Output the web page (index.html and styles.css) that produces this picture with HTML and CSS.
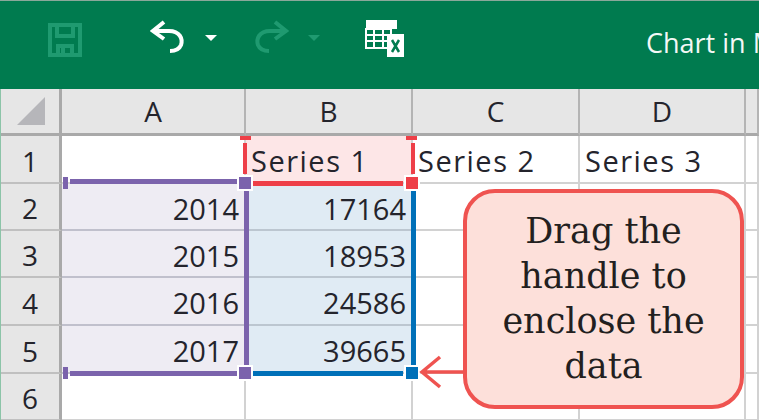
FILE: index.html
```html
<!DOCTYPE html>
<html lang="en">
<head>
    <meta charset="UTF-8">
    <meta name="viewport" content="width=device-width, initial-scale=1.0">
    <title>Chart in Microsoft Word</title>
    <link rel="stylesheet" href="styles.css">
</head>
<body>
    <div class="page">
        <!-- Quick access toolbar -->
        <header class="toolbar">
            <svg class="icon icon-save" width="34" height="34" viewBox="0 0 34 34">
                <path d="M2 2H32V32H2Z M9 3V13H25V3 M10 32V23H24V32 M15 25V32" fill="none" stroke="#1f9a70" stroke-width="4"/>
            </svg>
            <svg class="icon icon-undo" width="36" height="36" viewBox="0 0 36 36">
                <path d="M4 11H19C30 11 33 19 31 25C29 30 25 31 20 31" fill="none" stroke="#fff" stroke-width="4"/>
                <path d="M14 2L3 11L14 19" fill="none" stroke="#fff" stroke-width="4"/>
            </svg>
            <span class="caret"></span>
            <svg class="icon icon-redo" width="36" height="36" viewBox="0 0 36 36">
                <path d="M32 11H17C6 11 3 19 5 25C7 30 11 31 16 31" fill="none" stroke="#1f9a70" stroke-width="4"/>
                <path d="M22 2L33 11L22 19" fill="none" stroke="#1f9a70" stroke-width="4"/>
            </svg>
            <span class="caret caret-dim"></span>
            <svg class="icon icon-table" width="40" height="40" viewBox="0 0 40 40">
                <path d="M1 1H32V10H1Z" fill="#fff"/>
                <path d="M1 10H26V29H1Z M9 10V29 M18 10V29 M1 16H26 M1 22H26" fill="none" stroke="#fff" stroke-width="2"/>
                <path d="M22 15H39V38H22Z" fill="#fff"/>
                <path d="M27 21L34 33M34 21L27 33" stroke="#007b4f" stroke-width="2.5"/>
            </svg>
            <span class="title">Chart in Microsoft Word</span>
        </header>

        <div class="sheet">
            <div class="corner"><span class="corner-mark"></span></div>
            <div class="col-head">A</div>
            <div class="col-head">B</div>
            <div class="col-head">C</div>
            <div class="col-head">D</div>
            <div class="col-head"></div>

            <div class="row-head">1</div>
            <div class="cell"></div>
            <div class="cell text pink">Series 1</div>
            <div class="cell text">Series 2</div>
            <div class="cell text">Series 3</div>
            <div class="cell"></div>

            <div class="row-head">2</div>
            <div class="cell purple">2014</div>
            <div class="cell blue">17164</div>
            <div class="cell"></div>
            <div class="cell"></div>
            <div class="cell"></div>

            <div class="row-head">3</div>
            <div class="cell purple">2015</div>
            <div class="cell blue">18953</div>
            <div class="cell"></div>
            <div class="cell"></div>
            <div class="cell"></div>

            <div class="row-head">4</div>
            <div class="cell purple">2016</div>
            <div class="cell blue">24586</div>
            <div class="cell"></div>
            <div class="cell"></div>
            <div class="cell"></div>

            <div class="row-head">5</div>
            <div class="cell purple">2017</div>
            <div class="cell blue">39665</div>
            <div class="cell"></div>
            <div class="cell"></div>
            <div class="cell"></div>

            <div class="row-head">6</div>
            <div class="cell"></div>
            <div class="cell"></div>
            <div class="cell"></div>
            <div class="cell"></div>
            <div class="cell"></div>
        </div>

        <!-- Range outlines over the sheet -->
        <span class="mark red red-tick-l"></span>
        <span class="mark red red-tick-r"></span>
        <span class="mark red red-left"></span>
        <span class="mark red red-right"></span>
        <span class="mark red red-bottom"></span>
        <span class="mark purple-line purple-top"></span>
        <span class="mark purple-line purple-mid"></span>
        <span class="mark purple-line purple-bottom"></span>
        <span class="mark blue-line blue-right"></span>
        <span class="mark blue-line blue-bottom"></span>
        <span class="mark purple-line handle-end-top"></span>
        <span class="mark purple-line handle-end-bottom"></span>
        <span class="handle purple-line handle-a"></span>
        <span class="handle purple-line handle-b"></span>
        <span class="handle red handle-c"></span>
        <span class="handle blue-line handle-d"></span>

        <div class="callout">Drag the handle to enclose the data</div>
        <svg class="arrow" width="46" height="38" viewBox="0 0 46 38">
            <path d="M3 19H44M21 4L3 19L21 34" fill="none" stroke="#ef5350" stroke-width="3.5"/>
        </svg>
    </div>
</body>
</html>
```

FILE: styles.css
```css
body {
    margin: 0;
    background-color: #fff;
}

.page {
    position: relative;
    width: 759px;
    height: 420px;
    overflow: hidden;
    font-family: "Open Sans", Arial, sans-serif;
    color: #24242c;
}

/* Toolbar */
.toolbar {
    box-sizing: border-box;
    height: 89px;
    display: flex;
    align-items: center;
    padding-left: 48px;
    background-color: #007b4f;
    border-top: 1px solid #8aa89a;
    white-space: nowrap;
}

.icon {
    flex: none;
}

.icon-save {
    margin-top: -10px;
}

.icon-undo {
    margin-left: 68px;
    margin-top: -14px;
}

.caret {
    flex: none;
    margin-left: 19px;
    margin-top: -14px;
    border-left: 6px solid transparent;
    border-right: 6px solid transparent;
    border-top: 6px solid #fff;
}

.caret-dim {
    margin-left: 19px;
    border-top-color: #1f9a70;
}

.icon-redo {
    margin-left: 36px;
    margin-top: -14px;
}

.icon-table {
    margin-left: 45px;
    margin-top: -12px;
}

.title {
    margin-left: 241px;
    margin-top: -5px;
    color: #f4f8f6;
    font-size: 27px;
}

/* Sheet */
.sheet {
    display: grid;
    grid-template-columns: 61px 184px 167px 167px 166px 13px;
    grid-template-rows: 47px 48px 47px 47px 48px 48px 47px;
    border-left: 1px solid #8cc4a8;
    font-size: 29px;
}

.corner,
.col-head,
.row-head {
    box-sizing: border-box;
    display: flex;
    align-items: center;
    justify-content: center;
    background-color: #e6e6e6;
    border-right: 2px solid #b4b4b4;
    border-bottom: 3px solid #a9a9a9;
    font-size: 28px;
}

.corner {
    border-right-width: 3px;
    border-right-color: #a9a9a9;
}

.corner-mark {
    width: 0;
    height: 0;
    margin: 0 0 0 2px;
    border-left: 28px solid transparent;
    border-bottom: 28px solid #b6b6ba;
}

.row-head {
    padding-top: 3px;
    border-right: 3px solid #a9a9a9;
    border-bottom: 2px solid #c0c0c0;
}

.cell {
    box-sizing: border-box;
    display: flex;
    align-items: center;
    justify-content: flex-end;
    padding: 3px 5px 0;
    background-color: #fff;
    border-right: 2px solid #d2d2d2;
    border-bottom: 2px solid #d2d2d2;
}

.text {
    justify-content: flex-start;
    letter-spacing: 1.5px;
}

.pink {
    background-color: #fde6e7;
}

.purple {
    background-color: #eeecf3;
    border-bottom-color: #c0c0cc;
}

.blue {
    background-color: #e0ebf4;
    border-bottom-color: #bcc6d0;
}

/* Range outlines */
.mark,
.handle {
    position: absolute;
    display: block;
}

.handle {
    box-shadow: 0 0 0 2px #fff;
}

.red {
    background-color: #ee3f48;
}

.purple-line {
    background-color: #7b63ac;
}

.blue-line {
    background-color: #0070b8;
}

.red-tick-l { left: 240px; top: 136px; width: 11px; height: 4px; }
.red-tick-r { left: 406px; top: 136px; width: 11px; height: 4px; }
.red-left { left: 243px; top: 143px; width: 4px; height: 31px; }
.red-right { left: 411px; top: 143px; width: 4px; height: 31px; }
.red-bottom { left: 253px; top: 181px; width: 150px; height: 5px; }
.purple-top { left: 70px; top: 179px; width: 167px; height: 5px; }
.purple-mid { left: 244px; top: 191px; width: 5px; height: 175px; }
.purple-bottom { left: 70px; top: 371px; width: 167px; height: 5px; }
.blue-right { left: 411px; top: 191px; width: 5px; height: 175px; }
.blue-bottom { left: 253px; top: 371px; width: 150px; height: 5px; }
.handle-end-top { left: 63px; top: 177px; width: 5px; height: 12px; }
.handle-end-bottom { left: 63px; top: 367px; width: 5px; height: 12px; }
.handle-a { left: 239px; top: 177px; width: 12px; height: 12px; }
.handle-b { left: 239px; top: 367px; width: 12px; height: 12px; }
.handle-c { left: 406px; top: 177px; width: 12px; height: 12px; }
.handle-d { left: 406px; top: 367px; width: 12px; height: 12px; }

/* Callout */
.callout {
    position: absolute;
    left: 463px;
    top: 189px;
    box-sizing: border-box;
    width: 281px;
    height: 220px;
    display: flex;
    align-items: center;
    padding: 0 20px;
    text-align: center;
    background-color: #fde0da;
    border: 4px solid #ef5350;
    border-radius: 32px;
    font-family: "DejaVu Serif", "Liberation Serif", serif;
    font-size: 35px;
    line-height: 45px;
    color: #231f20;
}

.arrow {
    position: absolute;
    left: 419px;
    top: 353px;
}
```
